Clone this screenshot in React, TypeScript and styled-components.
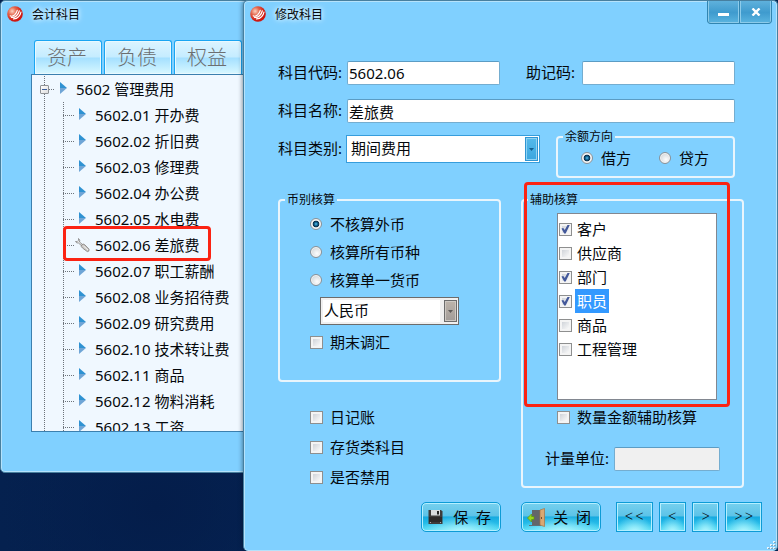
import React, { useId, useState } from "react";
import styled, { createGlobalStyle, css } from "styled-components";

const GlobalStyle = createGlobalStyle`
  * { box-sizing: border-box; }
  body {
    margin: 0;
    background: #05214f;
    color: #05080c;
    font: 15px/20px "Noto Sans", "Noto Sans CJK SC", sans-serif;
  }
  button, input, select { font: inherit; color: inherit; }
`;

/* ---------- desktop and windows ---------- */

const Desktop = styled.div`
  position: relative;
  min-height: 100vh;
  overflow: hidden;
  background:
    radial-gradient(ellipse at 20% 92%, #041d4a 0%, transparent 18%),
    linear-gradient(90deg, #05214f 0%, #062659 100%);
`;

const windowFrame = css`
  border: 1px solid #477f9f;
  border-radius: 5px;
  background: #80d0ff;
`;

const AccountsWindow = styled.section`
  ${windowFrame}
  position: absolute;
  top: 0;
  left: 0;
  width: 60%;
  padding-bottom: 40px;
  box-shadow: inset 0 0 0 1px #b5e2fb;
`;

const EditDialog = styled.section`
  ${windowFrame}
  position: relative;
  margin-left: 243px;
  min-height: 100vh;
  border-bottom: 0;
  padding-bottom: 19px;
  box-shadow: inset 0 0 0 1px #b5e2fb, 0 0 5px rgba(0, 20, 40, 0.6);
`;

const TitleBar = styled.header`
  display: flex;
  align-items: flex-start;
  height: 28px;
  padding: 0 5px 0 6px;
`;

const Brand = styled.div`
  display: flex;
  align-items: center;
  gap: 9px;
  height: 26px;
  flex: 1;
`;

const WindowTitle = styled.h1`
  margin: 0;
  font-size: 12px;
  font-weight: 400;
  line-height: 16px;
  padding-top: 2px;
  text-shadow: 0 0 4px #e8f7ff, 0 0 6px #e8f7ff;
`;

const Caption = styled.div`
  display: flex;
  border: 1px solid #3185b1;
  border-top: 0;
  border-radius: 0 0 4px 4px;
  overflow: hidden;
  background: #3185b1;
  gap: 1px;
`;

const CaptionButton = styled.button`
  display: grid;
  place-items: center;
  width: 31px;
  height: 22px;
  padding: 0;
  border: 1px solid #8ccbea;
  border-top: 0;
  background: linear-gradient(#5fb1dc, #3f9bce 55%, #58b2de);
`;

/* ---------- accounts tree ---------- */

const TabList = styled.div`
  display: flex;
  gap: 2px;
  padding: 11px 0 0 33px;
`;

const Tab = styled.button`
  width: 68px;
  height: 34px;
  padding: 0 2px 0 0;
  border: 1px solid #1aa5f2;
  border-bottom: 0;
  border-radius: 3px 3px 0 0;
  background: linear-gradient(#dcf4ff 0%, #c5ecff 48%, #a5e0ff 52%, #d8f8ff 100%);
  box-shadow: inset 0 0 0 1px #e8f9ff;
  color: #6c6e70;
  font-size: 20px;
  font-weight: 300;
  line-height: 28px;
`;

const TreePanel = styled.div`
  height: 358px;
  margin-left: 30px;
  overflow: hidden;
  border: 1px solid #3b7fae;
  background: #f0f8ff;
  padding: 1px 0 0 8px;
`;

const dotsDown = "repeating-linear-gradient(#6d737a 0 1px, transparent 1px 2px)";
const dotsAcross = "repeating-linear-gradient(90deg, #6d737a 0 1px, transparent 1px 2px)";

const TreeRoot = styled.div`
  background: ${dotsDown} 4px 0 / 1px 100% no-repeat;
`;

const TreeRow = styled.div`
  display: flex;
  align-items: center;
  height: 26px;
  white-space: nowrap;
`;

const Toggle = styled.button`
  display: grid;
  place-items: center;
  width: 9px;
  height: 9px;
  padding: 0;
  border: 1px solid #8e9296;
  border-radius: 1px;
  background: linear-gradient(135deg, #fff, #dedede);
`;

const Connector = styled.span<{ $width: number }>`
  width: ${(p) => p.$width}px;
  height: 1px;
  background: ${dotsAcross};
`;

const NodeIcon = styled.span<{ $wide?: boolean }>`
  display: grid;
  place-items: center start;
  width: ${(p) => (p.$wide ? 21 : 17)}px;
  margin-left: ${(p) => (p.$wide ? 0 : 4)}px;
`;

const TreeBranch = styled.div`
  margin-left: 23px;
  background: ${dotsDown} 0 0 / 1px 100% no-repeat;
`;

const Highlight = styled.div`
  position: absolute;
  border: 3px solid #fb2313;
  border-radius: 4px;
  pointer-events: none;
`;

const RowHighlight = styled(Highlight)`
  top: 225px;
  left: 62px;
  width: 148px;
  height: 35px;
`;

const GroupHighlight = styled(Highlight)`
  inset: -26px 12px 79px 1px;
`;

/* ---------- form ---------- */

const Body = styled.form`
  padding: 32px 33px 0 34px;
`;

const FieldGrid = styled.div`
  display: grid;
  grid-template-columns: 69px 1fr 82px 1fr;
  row-gap: 14px;
  align-items: center;
  margin-right: 9px;
`;

const Label = styled.label<{ $indent?: boolean }>`
  padding: 0 0 2px ${(p) => (p.$indent ? 26 : 0)}px;
  white-space: nowrap;
  line-height: 20px;
`;

const TextInput = styled.input<{ $span?: boolean }>`
  width: 100%;
  min-width: 0;
  height: 24px;
  padding: 0 1px;
  border: 1px solid #74add0;
  border-top-color: #5b9cc4;
  border-radius: 2px;
  background: #fff;
  ${(p) => p.$span && "grid-column: span 3;"}
  &:disabled { background: #f0f0f0; }
`;

const CategoryRow = styled.div`
  display: flex;
  align-items: flex-start;
  margin: 6px 9px 0 0;
`;

const CategoryField = styled.div`
  display: grid;
  grid-template-columns: 68px 1fr;
  align-items: center;
  flex: 1;
  margin: 6px 16px 0 0;
`;

const Combo = styled.div<{ $muted?: boolean }>`
  display: flex;
  height: 28px;
  padding: ${(p) => (p.$muted ? "2px 1px 2px 2px" : "1px")};
  gap: ${(p) => (p.$muted ? 4 : 0)}px;
  border: 1px solid ${(p) => (p.$muted ? "#6c6c6c" : "#369ddc")};
  background: ${(p) => (p.$muted ? "#f0f0f0" : "#fff")};
`;

const ComboSelect = styled.select<{ $muted?: boolean }>`
  appearance: none;
  flex: 1;
  min-width: 0;
  border: 0;
  border-radius: 0;
  outline: 0;
  padding: 0 ${(p) => (p.$muted ? 1 : 3)}px 2px;
  background: #fff;
  opacity: 1;
`;

const ComboArrow = styled.span<{ $muted?: boolean }>`
  display: grid;
  place-items: center;
  width: 13px;
  border: 1px solid ${(p) => (p.$muted ? "#6c6c6c" : "#2f95d2")};
  box-shadow: inset 0 0 0 1px ${(p) => (p.$muted ? "#cdc8c2" : "#8fd3f4")};
  background: ${(p) =>
    p.$muted ? "linear-gradient(#bdb4ab, #a29c98)" : "linear-gradient(#55b9ea, #3ba6df)"};
`;

const Group = styled.fieldset`
  position: relative;
  min-width: 0;
  margin: 0;
  padding: 0;
  border: 2px solid #e9f5fc;
  border-radius: 4px;
`;

const Legend = styled.legend`
  margin-left: 5px;
  padding: 0 2px;
  font-size: 12px;
  line-height: 16px;
`;

const DirectionGroup = styled(Group)`
  width: 179px;
`;

const DirectionOptions = styled.div`
  display: flex;
  gap: 28px;
  padding: 0 0 5px 23px;
`;

const CurrencyOptions = styled.div`
  padding: 2px 0 24px 30px;
`;

const AuxOptions = styled.div`
  padding: 5px 22px 15px;
`;

const Columns = styled.div`
  display: grid;
  grid-template-columns: 1fr 1fr;
  gap: 20px;
  align-items: start;
  margin-top: 14px;
`;

const CurrencyCombo = styled.div`
  width: 139px;
  margin: 3px 0 3px 10px;
`;

const FlagList = styled.div`
  padding: 20px 0 0 32px;
`;

const Choice = styled.label<{ $height?: number; $gap?: number }>`
  display: flex;
  align-items: center;
  gap: ${(p) => p.$gap ?? 8}px;
  height: ${(p) => p.$height ?? 28}px;
  white-space: nowrap;
`;

const Radio = styled.input.attrs({ type: "radio" })`
  appearance: none;
  flex: none;
  width: 12px;
  height: 12px;
  margin: 0;
  border: 1px solid #8b9298;
  border-radius: 50%;
  background: radial-gradient(circle at 60% 65%, #fdfdfd 0, #d3d7da 75%);
  box-shadow: inset 0 0 0 1px #f4f4f4;
  &:checked {
    background: radial-gradient(circle at 50% 50%, #5cc4ee 0, #11628f 24%, #0c2c46 42%, #eef1f3 52%);
  }
`;

const CheckBox = styled.input.attrs({ type: "checkbox" })`
  appearance: none;
  flex: none;
  width: 13px;
  height: 13px;
  margin: 0;
  border: 1px solid #8e8f8f;
  background: linear-gradient(135deg, #c4c9d0, #f8f8f8 80%);
  box-shadow: inset 0 0 0 2px #f4f4f4;
  &:checked::after {
    content: "";
    display: block;
    width: 9px;
    height: 9px;
    margin: 1px;
    background: #43589a;
    clip-path: polygon(5% 45%, 25% 38%, 42% 62%, 75% 0, 100% 0, 52% 100%, 35% 100%);
  }
`;

const ListBox = styled.div`
  height: 187px;
  margin: 0 3px 0 12px;
  padding: 3px 1px;
  border: 1px solid #828790;
  background: #fff;
`;

const ListItem = styled.label`
  display: flex;
  align-items: center;
  gap: 3px;
  height: 24px;
`;

const ListText = styled.span<{ $selected?: boolean }>`
  padding: 0 2px;
  line-height: 24px;
  background: ${(p) => (p.$selected ? "#3399ff" : "transparent")};
  color: ${(p) => (p.$selected ? "#fff" : "inherit")};
`;

const QuantityRow = styled.div`
  margin: 3px 0 0 12px;
`;

const UnitRow = styled.div`
  display: flex;
  align-items: center;
  gap: 5px;
  margin-top: 16px;
`;

/* ---------- footer ---------- */

const Footer = styled.footer`
  display: flex;
  justify-content: flex-end;
  gap: 20px;
  padding: 10px 15px 0 0;
`;

const Pager = styled.div`
  display: flex;
  gap: 6px;
  margin-left: -5px;
`;

const glassy = css`
  height: 30px;
  padding: 0;
  border: 1px solid #0d9bd6;
  background:
    radial-gradient(ellipse 55% 60% at 50% 105%, #b6f7ff 0%, rgba(120, 236, 252, 0) 100%),
    linear-gradient(#77d0ee 0%, #5cc3e8 46%, #16aae0 50%, #25bbe8 72%, #55dff6 100%);
  box-shadow: inset 0 0 0 1px #b4efff;
`;

const ActionButton = styled.button`
  ${glassy}
  display: flex;
  align-items: center;
  justify-content: space-between;
  width: 80px;
  padding: 0 9px 0 5px;
  border-radius: 5px;
`;

const PagerButton = styled.button<{ $double?: boolean }>`
  ${glassy}
  width: ${(p) => (p.$double ? 37 : 27)}px;
  padding-bottom: 4px;
  font: 300 18px/24px Lato, sans-serif;
`;

const Grip = styled.svg`
  position: absolute;
  right: 1px;
  bottom: 1px;
`;

/* ---------- icons ---------- */

const Logo = () => {
  const id = useId();
  return (
    <svg width="16" height="16" viewBox="0 0 16 16" aria-hidden="true">
      <defs>
        <radialGradient id={id} cx="32%" cy="32%" r="60%">
          <stop offset="0" stopColor="#fbd3c2" />
          <stop offset="0.45" stopColor="#e4644a" />
          <stop offset="1" stopColor="#cf1812" />
        </radialGradient>
      </defs>
      <circle cx="8" cy="8" r="7.8" fill={`url(#${id})`} />
      <path d="M3.200 9.800Q5 11 7.500 9Q9.800 7 10.300 4.200" fill="none" stroke="#fff" strokeWidth="1.100" strokeLinecap="round" />
      <path d="M4.500 11.300Q7 12 9.500 9.700Q11.800 7.500 12.300 4.800" fill="none" stroke="#fff" strokeWidth="1.200" strokeLinecap="round" />
      <path d="M6.500 12.900Q9.500 13 11.700 10.600Q13.600 8.500 14 6" fill="none" stroke="#fff" strokeWidth="1.200" strokeLinecap="round" />
    </svg>
  );
};

const Arrow = () => (
  <svg width="8" height="14" viewBox="0 0 8 14" aria-hidden="true">
    <path d="M1 0 8 6H1Z" fill="#2f92d2" />
    <path d="M1 12V6H8Z" fill="#6fa5d6" />
  </svg>
);

const Wrench = () => (
  <svg width="17" height="16" viewBox="0 0 17 16" aria-hidden="true">
    <path d="M4.500 1.500Q6.500 3 5.500 5L8.500 7.500 7.500 8.700 4.500 6Q2.500 6.500 1.500 4.500L3.200 4.600 4.600 3.200Z" fill="#ececec" stroke="#8b8b8b" strokeWidth="0.9" />
    <path d="M7.500 8Q9 6 11 8L15 12.200Q15.500 14.800 13.300 14.600L8.500 11Q6.500 9.500 7.500 8Z" fill="#c9c7c4" stroke="#8b8784" strokeWidth="0.9" />
    <path d="m9.500 9 4.500 4" stroke="#f2f2f2" />
  </svg>
);

const Floppy = () => (
  <svg width="17" height="16" viewBox="0 0 17 16" aria-hidden="true">
    <path d="M2 1H14L15.500 2.500V15H1.500V1.500Z" fill="#3e3c3b" />
    <path d="M4 1H13V6.500H4Z" fill="#d9dcde" />
    <path d="M10 2H12V5.500H10Z" fill="#242424" />
    <path d="M2 8H15V13H2Z" fill="#2d2a29" />
    <path d="M3 13.500h1M13 13.500h1" stroke="#aaa" />
  </svg>
);

const Door = () => (
  <svg width="19" height="19" viewBox="0 0 19 19" aria-hidden="true">
    <path d="M5 2H14V17H5Z" fill="#62666a" />
    <path d="M2 17.500H14" stroke="#5f7077" />
    <path d="M13 2 17.500 0.500V18.500L13 17Z" fill="#d9a873" stroke="#a77443" strokeWidth="0.7" />
    <path d="M14.500 9v2" stroke="#74502e" />
    <path d="M0.500 10 4.500 6V8.500H7V11.500H4.500V14Z" fill="#9bd51a" stroke="#5d9509" strokeWidth="0.7" />
  </svg>
);

const DownMark = ({ color }: { color: string }) => (
  <svg width="5" height="3" viewBox="0 0 5 3" aria-hidden="true">
    <path d="M0 0H5L2.500 3Z" fill={color} />
  </svg>
);

/* ---------- data ---------- */

const subAccounts = [
  "5602.01 开办费",
  "5602.02 折旧费",
  "5602.03 修理费",
  "5602.04 办公费",
  "5602.05 水电费",
  "5602.06 差旅费",
  "5602.07 职工薪酬",
  "5602.08 业务招待费",
  "5602.09 研究费用",
  "5602.10 技术转让费",
  "5602.11 商品",
  "5602.12 物料消耗",
  "5602.13 工资",
];
const activeAccount = "5602.06 差旅费";
const currencyModes = ["不核算外币", "核算所有币种", "核算单一货币"];
const auxItems = ["客户", "供应商", "部门", "职员", "商品", "工程管理"];
const flags = ["日记账", "存货类科目", "是否禁用"];

export default function App() {
  const [direction, setDirection] = useState("借方");
  const [mode, setMode] = useState(currencyModes[0]);
  const [selected, setSelected] = useState("职员");
  const [aux, setAux] = useState(["客户", "部门", "职员"]);

  const toggleAux = (item: string) => {
    setSelected(item);
    setAux((list) => (list.includes(item) ? list.filter((x) => x !== item) : [...list, item]));
  };

  return (
    <>
      <GlobalStyle />
      <Desktop>
        <AccountsWindow>
          <TitleBar>
            <Brand>
              <Logo />
              <WindowTitle>会计科目</WindowTitle>
            </Brand>
          </TitleBar>
          <TabList role="tablist">
            {["资产", "负债", "权益"].map((t) => (
              <Tab key={t} role="tab" type="button">{t}</Tab>
            ))}
          </TabList>
          <TreePanel role="tree">
            <TreeRoot>
              <TreeRow role="treeitem" aria-expanded="true">
                <Toggle type="button" aria-label="折叠">
                  <svg width="5" height="1" aria-hidden="true"><path d="M0 0.500H5" stroke="#3c5f9c" /></svg>
                </Toggle>
                <Connector $width={6} />
                <NodeIcon><Arrow /></NodeIcon>
                5602 管理费用
              </TreeRow>
              <TreeBranch role="group">
                {subAccounts.map((name) => (
                  <TreeRow key={name} role="treeitem">
                    <Connector $width={11} />
                    <NodeIcon $wide={name === activeAccount}>
                      {name === activeAccount ? <Wrench /> : <Arrow />}
                    </NodeIcon>
                    {name}
                  </TreeRow>
                ))}
              </TreeBranch>
            </TreeRoot>
          </TreePanel>
          <RowHighlight />
        </AccountsWindow>

        <EditDialog>
          <TitleBar>
            <Brand>
              <Logo />
              <WindowTitle>修改科目</WindowTitle>
            </Brand>
            <Caption>
              <CaptionButton type="button" aria-label="最小化">
                <svg width="11" height="12" aria-hidden="true"><path d="M0 8.500H11" stroke="#fff" strokeWidth="3" /></svg>
              </CaptionButton>
              <CaptionButton type="button" aria-label="关闭窗口">
                <svg width="10" height="8" viewBox="0 0 10 8" aria-hidden="true"><path d="M1.500 0.500 8.500 7.500M8.500 0.500 1.500 7.500" stroke="#fff" strokeWidth="2.400" /></svg>
              </CaptionButton>
            </Caption>
          </TitleBar>

          <Body id="account-form" onSubmit={(e) => e.preventDefault()}>
            <FieldGrid>
              <Label htmlFor="code">科目代码:</Label>
              <TextInput id="code" defaultValue="5602.06" />
              <Label htmlFor="mnemonic" $indent>助记码:</Label>
              <TextInput id="mnemonic" />
              <Label htmlFor="name">科目名称:</Label>
              <TextInput id="name" defaultValue="差旅费" $span />
            </FieldGrid>

            <CategoryRow>
              <CategoryField>
                <Label htmlFor="category">科目类别:</Label>
                <Combo>
                  <ComboSelect id="category">
                    <option>期间费用</option>
                  </ComboSelect>
                  <ComboArrow><DownMark color="#14608f" /></ComboArrow>
                </Combo>
              </CategoryField>
              <DirectionGroup>
                <Legend>余额方向</Legend>
                <DirectionOptions>
                  {["借方", "贷方"].map((d) => (
                    <Choice key={d} $height={26}>
                      <Radio name="direction" checked={direction === d} onChange={() => setDirection(d)} />
                      {d}
                    </Choice>
                  ))}
                </DirectionOptions>
              </DirectionGroup>
            </CategoryRow>

            <Columns>
              <div>
                <Group>
                  <Legend>币别核算</Legend>
                  <CurrencyOptions>
                    {currencyModes.map((m) => (
                      <Choice key={m}>
                        <Radio name="currency-mode" checked={mode === m} onChange={() => setMode(m)} />
                        {m}
                      </Choice>
                    ))}
                    <CurrencyCombo>
                      <Combo $muted>
                        <ComboSelect $muted aria-label="货币" disabled>
                          <option>人民币</option>
                        </ComboSelect>
                        <ComboArrow $muted><DownMark color="#5f5b58" /></ComboArrow>
                      </Combo>
                    </CurrencyCombo>
                    <Choice $gap={7}><CheckBox />期末调汇</Choice>
                  </CurrencyOptions>
                </Group>
                <FlagList>
                  {flags.map((f) => (
                    <Choice key={f} $height={30} $gap={7}><CheckBox />{f}</Choice>
                  ))}
                </FlagList>
              </div>

              <Group>
                <Legend>辅助核算</Legend>
                <AuxOptions>
                  <ListBox>
                    {auxItems.map((item) => (
                      <ListItem key={item}>
                        <CheckBox checked={aux.includes(item)} onChange={() => toggleAux(item)} />
                        <ListText $selected={item === selected}>{item}</ListText>
                      </ListItem>
                    ))}
                  </ListBox>
                  <QuantityRow>
                    <Choice $gap={7}><CheckBox />数量金额辅助核算</Choice>
                  </QuantityRow>
                  <UnitRow>
                    <Label htmlFor="unit">计量单位:</Label>
                    <TextInput id="unit" disabled />
                  </UnitRow>
                </AuxOptions>
                <GroupHighlight />
              </Group>
            </Columns>
          </Body>

          <Footer>
            <ActionButton type="submit" form="account-form"><Floppy />保&nbsp;&nbsp;存</ActionButton>
            <ActionButton type="button"><Door />关&nbsp;&nbsp;闭</ActionButton>
            <Pager>
              <PagerButton type="button" $double>&lt;&lt;</PagerButton>
              <PagerButton type="button">&lt;</PagerButton>
              <PagerButton type="button">&gt;</PagerButton>
              <PagerButton type="button" $double>&gt;&gt;</PagerButton>
            </Pager>
          </Footer>
          <Grip width="9" height="9" viewBox="0 0 9 9" aria-hidden="true">
            <path d="M6 0h2v2h-2zM3 3h2v2h-2zM6 3h2v2h-2zM0 6h2v2h-2zM3 6h2v2h-2zM6 6h2v2h-2z" fill="#e6f6ff" />
            <path d="M7 1h2v1h-2zM4 4h2v1h-2zM7 4h2v1h-2zM1 7h2v1h-2zM4 7h2v1h-2zM7 7h2v1h-2z" fill="#8aa9bb" />
          </Grip>
        </EditDialog>
      </Desktop>
    </>
  );
}
